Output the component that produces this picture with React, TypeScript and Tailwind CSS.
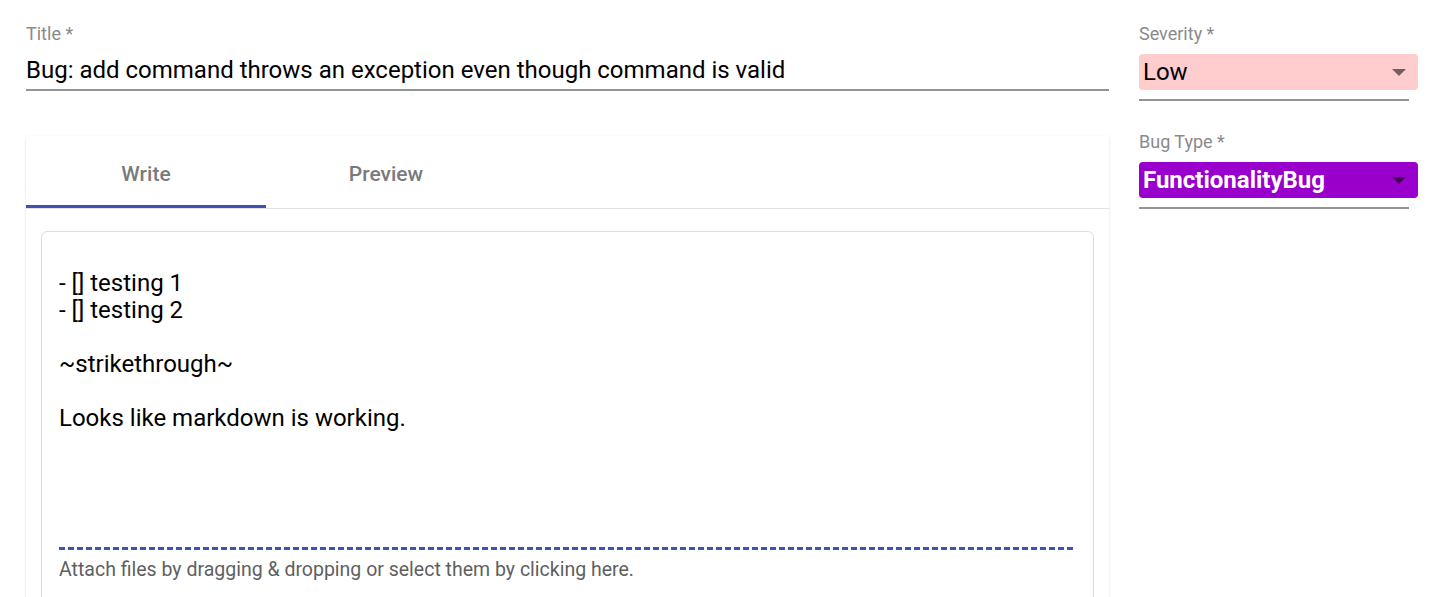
import React from 'react';

const editorLines = [
  '',
  '- [] testing 1',
  '- [] testing 2',
  '',
  '~strikethrough~',
  '',
  'Looks like markdown is working.',
];

function Caret({ color }: { color: string }) {
  return (
    <svg width="14" height="7" viewBox="0 0 14 7" className="shrink-0">
      <path d="M0 0 L14 0 L7 7 Z" fill={color} />
    </svg>
  );
}

function SelectField({
  label,
  value,
  boxClass,
  textClass,
  caret,
}: {
  label: string;
  value: string;
  boxClass: string;
  textClass: string;
  caret: string;
}) {
  return (
    <div>
      <div className="text-[18px] leading-[21px] text-[#8a8a8a]">{label}</div>
      <div className={`mt-[10px] h-[36px] rounded-[4px] pl-[4px] pr-[12px] flex items-center justify-between ${boxClass}`}>
        <span className={textClass}>{value}</span>
        <Caret color={caret} />
      </div>
      <div className="mt-[9px] w-[270px] h-[2px] bg-[#949494]" />
    </div>
  );
}

export default function App() {
  return (
    <div className="min-h-screen bg-white font-['Roboto',sans-serif] flex pl-[26px] pt-[23px] overflow-hidden">
      {/* left column */}
      <div className="w-[1083px] shrink-0">
        <div className="text-[18px] leading-[21px] text-[#8a8a8a]">Title *</div>
        <div className="mt-[10px] text-[24px] leading-[32px] text-black pb-[3px] border-b-2 border-[#949494]">
          Bug: add command throws an exception even though command is valid
        </div>

        <div className="mt-[45px] bg-white rounded-[2px] shadow-[0_1px_3px_0_rgba(0,0,0,0.12),0_1px_1px_0_rgba(0,0,0,0.06)]">
          <div className="flex border-b border-[#e0e0e0]">
            <div className="w-[240px] h-[72px] pt-[8px] flex items-center justify-center border-b-[3px] border-[#3f51b5] text-[21px] font-medium text-[#7a7a7a]">
              Write
            </div>
            <div className="w-[240px] h-[72px] pt-[5px] flex items-center justify-center text-[21px] font-medium text-[#7a7a7a]">
              Preview
            </div>
          </div>

          <div className="px-[15px] pt-[22px] pb-[40px]">
            <div className="border border-[#dedede] rounded-[6px] px-[17px] pt-[11px] pb-[40px]">
              <div className="h-[304px] text-[24px] leading-[27px] text-black">
                {editorLines.map((line, i) => (
                  <div key={i} className="h-[27px] whitespace-pre">
                    {line}
                  </div>
                ))}
              </div>
              <div className="h-[3px] w-[1017px] bg-[repeating-linear-gradient(to_right,#3f51b5_0px,#3f51b5_6px,transparent_6px,transparent_9px)]" />
              <div className="mt-[8px] text-[19.5px] leading-[24px] text-[#5f5f5f]">
                Attach files by dragging &amp; dropping or select them by clicking here.
              </div>
            </div>
          </div>
        </div>
      </div>

      {/* right column */}
      <div className="ml-[30px] w-[279px] shrink-0">
        <SelectField
          label="Severity *"
          value="Low"
          boxClass="bg-[#ffcdcd]"
          textClass="text-[24px] leading-[28px] text-black"
          caret="rgba(0,0,0,0.54)"
        />
        <div className="mt-[30px]">
          <SelectField
            label="Bug Type *"
            value="FunctionalityBug"
            boxClass="bg-[#9900cc]"
            textClass="text-[24px] leading-[28px] font-bold text-white"
            caret="rgba(0,0,0,0.54)"
          />
        </div>
      </div>
    </div>
  );
}
